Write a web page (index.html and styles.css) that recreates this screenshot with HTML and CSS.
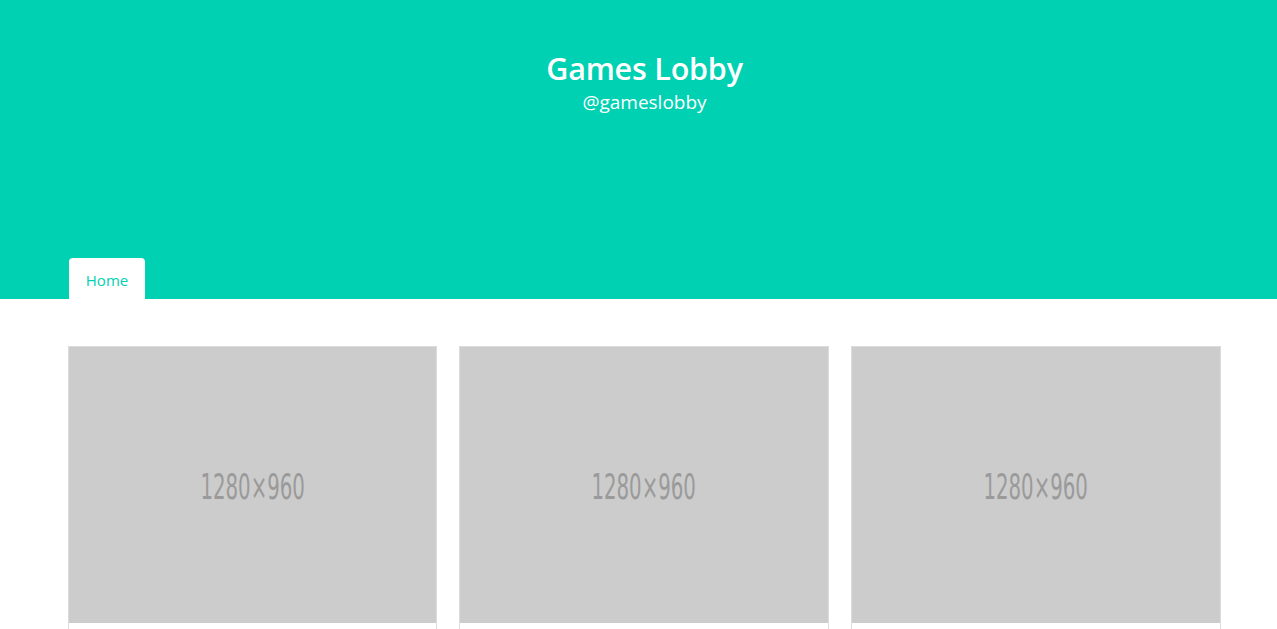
FILE: index.html
```html
<!DOCTYPE html>
<html lang="en">
<head>
<meta charset="utf-8">
<title>Games Lobby</title>
<link rel="stylesheet" href="styles.css">
</head>
<body>
<header class="hero">
  <div class="hero-body">
    <h1 class="title">Games Lobby</h1>
    <p class="subtitle">@gameslobby</p>
  </div>
  <nav class="tabs">
    <a class="tab is-active" href="#">Home</a>
  </nav>
</header>
<main class="content">
  <div class="cards">
    <div class="card"><div class="thumb"><span class="ph">1280×960</span></div><div class="card-body"></div></div>
    <div class="card"><div class="thumb"><span class="ph">1280×960</span></div><div class="card-body"></div></div>
    <div class="card"><div class="thumb"><span class="ph">1280×960</span></div><div class="card-body"></div></div>
  </div>
</main>
</body>
</html>
```
FILE: styles.css
```css
* { box-sizing: border-box; }
html, body { margin: 0; padding: 0; }
body {
  font-family: "Open Sans", "Noto Sans", sans-serif;
  background: #fff;
  color: #4a4a4a;
}
.hero {
  background: #00d1b2;
  height: 299px;
  display: flex;
  flex-direction: column;
}
.hero-body {
  flex: 1;
  text-align: center;
  padding-top: 48px;
  padding-left: 12px;
}
.title {
  margin: 0;
  color: #fff;
  font-size: 30.5px;
  font-weight: 600;
  line-height: 40px;
  letter-spacing: -0.2px;
}
.subtitle {
  margin: 0;
  color: #fff;
  font-size: 19px;
  line-height: 28px;
  font-weight: 400;
}
.tabs {
  display: flex;
  padding-left: 69px;
}
.tab {
  display: block;
  width: 76px;
  height: 41px;
  background: #fff;
  border-radius: 4px 4px 0 0;
  color: #00d1b2;
  text-decoration: none;
  font-size: 15px;
  line-height: 44px;
  text-align: center;
}
.content {
  padding: 47px 0 0 68px;
}
.cards {
  display: grid;
  grid-template-columns: 369px 370px 370px;
  column-gap: 22px;
}
.card {
  border: 1px solid #dcdcdc;
  border-bottom: none;
  background: #fff;
}
.thumb {
  height: 276px;
  background: #cccccc;
  display: flex;
  align-items: center;
  justify-content: center;
}
.ph {
  font-family: "DejaVu Sans Condensed", "DejaVu Sans", sans-serif;
  font-size: 36px;
  color: #9a9a9a;
  display: inline-block;
  transform: scaleX(0.61);
  margin-top: 2px;
}
.card-body {
  height: 40px;
}
```
